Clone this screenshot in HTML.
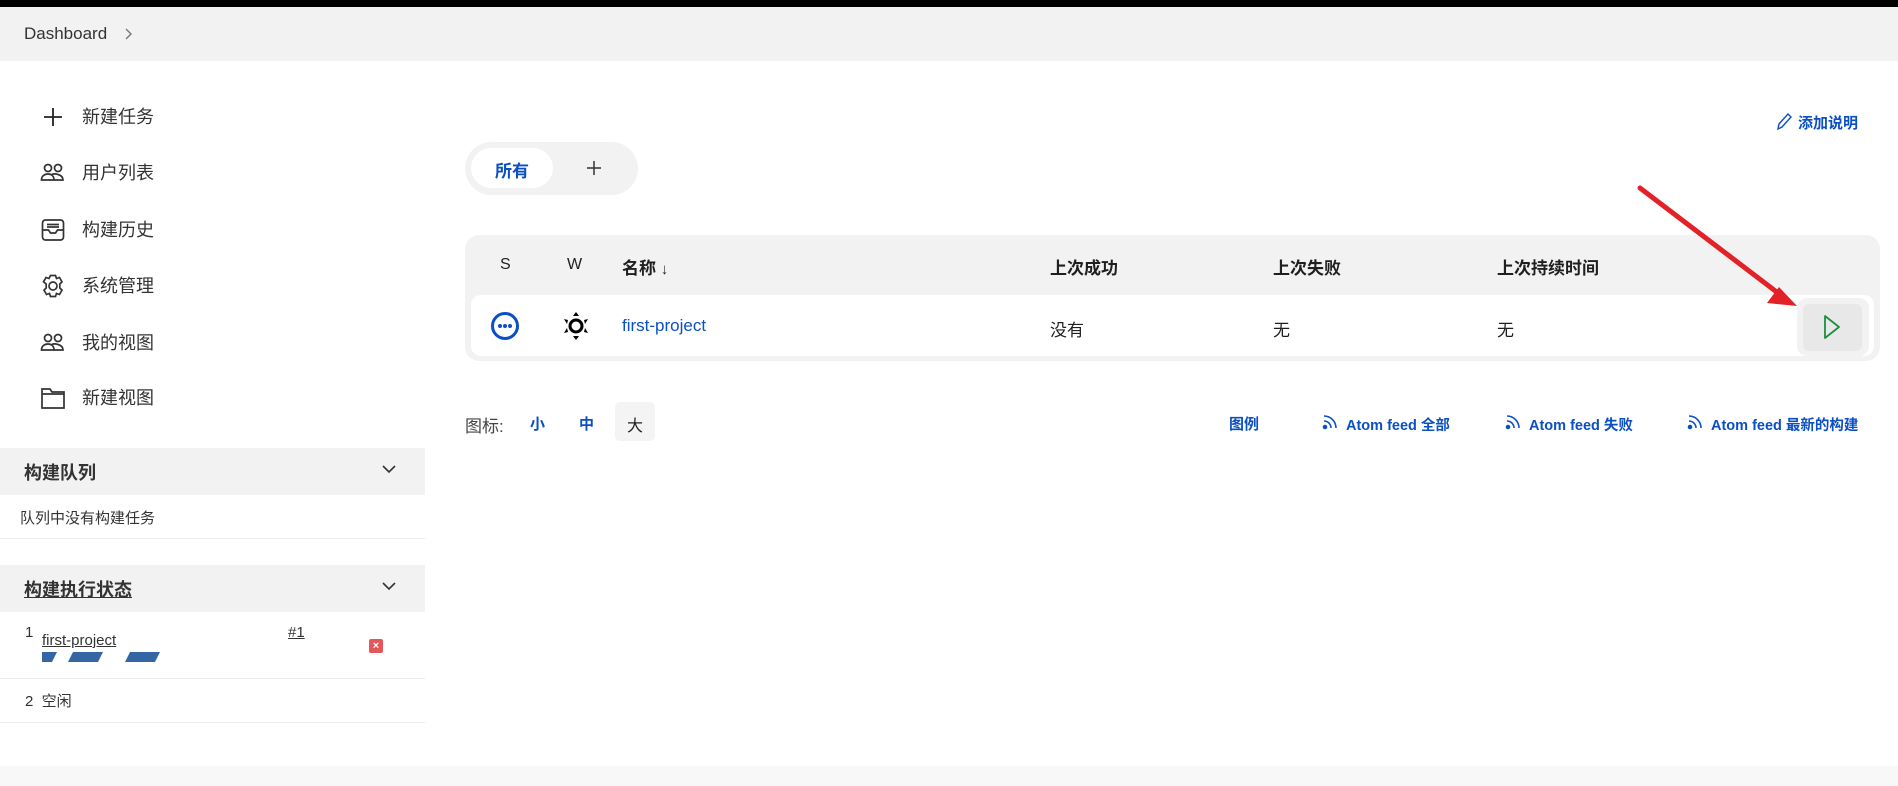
<!DOCTYPE html>
<html><head><meta charset="utf-8"><style>
*{margin:0;padding:0;box-sizing:border-box}
body{width:1898px;height:786px;overflow:hidden;background:#fff;font-family:"Liberation Sans","Noto Sans CJK SC",sans-serif;color:#1f1f1f;position:relative}
.a{position:absolute;white-space:nowrap}
.blue{color:#0b4fc4}
.b{font-weight:bold}
.ic{position:absolute;left:40px;width:26px;height:26px}
.menu{position:absolute;left:82px;font-size:18px;color:#333;line-height:24px}
</style></head><body>
<div class="a" style="left:0;top:0;width:1898px;height:7px;background:#000"></div>
<div class="a" style="left:0;top:7px;width:1898px;height:54px;background:#f2f2f2"></div>
<div class="a" style="left:24px;top:24px;font-size:17px;color:#333">Dashboard</div>
<svg class="a" style="left:123px;top:27px" width="10" height="14" viewBox="0 0 10 14"><path d="M3 2l5 5-5 5" fill="none" stroke="#777" stroke-width="1.4"/></svg>

<svg class="ic" style="top:104px" viewBox="0 0 26 26"><path d="M13 4v18M4 13h18" stroke="#222" stroke-width="1.8"/></svg>
<div class="menu" style="top:105px">新建任务</div>
<svg class="ic" style="top:160px" viewBox="0 0 26 26" fill="none" stroke="#333" stroke-width="1.7"><circle cx="8" cy="8" r="3.5"/><circle cx="18" cy="8" r="3.5"/><path d="M1.5 20c0-4 3-6 6.5-6s6 2 6 6H1.5zM12 14.5c1.5-.8 3.5-.8 6 0 3 .8 5 2.5 5 5.5H14"/></svg>
<div class="menu" style="top:161px">用户列表</div>
<svg class="ic" style="top:217px" viewBox="0 0 26 26" fill="none" stroke="#333" stroke-width="1.7"><rect x="2.5" y="3" width="21" height="20" rx="3"/><path d="M2.5 13h6l2 3h5l2-3h6M7 7.5h12M7 10h12"/></svg>
<div class="menu" style="top:218px">构建历史</div>
<svg class="ic" style="top:273px" viewBox="0 0 26 26" fill="none" stroke="#333" stroke-width="1.7"><path d="M10.5 2.5h5l1 3 3-1 2.5 4.3-2.2 2.2v4l2.2 2.2-2.5 4.3-3-1-1 3h-5l-1-3-3 1-2.5-4.3 2.2-2.2v-4L3.5 8.8 6 4.5l3 1z"/><circle cx="13" cy="13" r="4"/></svg>
<div class="menu" style="top:274px">系统管理</div>
<svg class="ic" style="top:330px" viewBox="0 0 26 26" fill="none" stroke="#333" stroke-width="1.7"><circle cx="8" cy="8" r="3.5"/><circle cx="18" cy="8" r="3.5"/><path d="M1.5 20c0-4 3-6 6.5-6s6 2 6 6H1.5zM12 14.5c1.5-.8 3.5-.8 6 0 3 .8 5 2.5 5 5.5H14"/></svg>
<div class="menu" style="top:331px">我的视图</div>
<svg class="ic" style="top:385px" viewBox="0 0 26 26" fill="none" stroke="#333" stroke-width="1.7"><path d="M2 4h8l2 3h12v16H2zM2 9h22"/></svg>
<div class="menu" style="top:386px">新建视图</div>

<div class="a" style="left:0;top:448px;width:425px;height:47px;background:#f2f2f2"></div>
<div class="a b" style="left:24px;top:459px;font-size:18px;color:#333">构建队列</div>
<svg class="a" style="left:382px;top:464px" width="14" height="10" viewBox="0 0 14 10"><path d="M1 2l6 6 6-6" fill="none" stroke="#333" stroke-width="1.6"/></svg>
<div class="a" style="left:20px;top:507px;font-size:15px;color:#333">队列中没有构建任务</div>
<div class="a" style="left:0;top:538px;width:425px;height:1px;background:#ececec"></div>

<div class="a" style="left:0;top:565px;width:425px;height:47px;background:#f2f2f2"></div>
<div class="a b" style="left:24px;top:576px;font-size:18px;color:#333;text-decoration:underline">构建执行状态</div>
<svg class="a" style="left:382px;top:581px" width="14" height="10" viewBox="0 0 14 10"><path d="M1 2l6 6 6-6" fill="none" stroke="#333" stroke-width="1.6"/></svg>
<div class="a" style="left:25px;top:624px;font-size:15px;color:#333">1</div>
<div class="a" style="left:42px;top:632px;font-size:15px;color:#333;text-decoration:underline">first-project</div>
<svg class="a" style="left:42px;top:652px" width="120" height="10" viewBox="0 0 120 10"><path d="M0 0h15l-5 10H0zM31 0h30l-5 10H26zM88 0h30l-5 10H83z" fill="#3465a4"/></svg>
<div class="a" style="left:288px;top:624px;font-size:15px;color:#333;text-decoration:underline">#1</div>
<div class="a" style="left:369px;top:639px;width:14px;height:14px;background:#e4585a;border-radius:2px;color:#fff;font-size:11px;line-height:14px;text-align:center;font-weight:bold">×</div>
<div class="a" style="left:0;top:678px;width:425px;height:1px;background:#ececec"></div>
<div class="a" style="left:25px;top:690px;font-size:15px;color:#333">2&nbsp; 空闲</div>
<div class="a" style="left:0;top:722px;width:425px;height:1px;background:#ececec"></div>
<div class="a" style="left:0;top:766px;width:1898px;height:20px;background:#f8f8f8"></div>

<svg class="a" style="left:1775px;top:111px" width="18" height="20" viewBox="0 0 18 20"><path d="M3 18l1-5 9-10 3 3-9 10z" fill="none" stroke="#0b4fc4" stroke-width="1.4"/></svg>
<div class="a b blue" style="left:1798px;top:112px;font-size:15px">添加说明</div>

<div class="a" style="left:465px;top:142px;width:173px;height:53px;background:#f2f2f2;border-radius:27px"></div>
<div class="a" style="left:471px;top:148px;width:82px;height:40px;background:#fff;border-radius:20px"></div>
<div class="a b blue" style="left:495px;top:157px;font-size:17px">所有</div>
<svg class="a" style="left:586px;top:160px" width="16" height="16" viewBox="0 0 16 16"><path d="M8 1v14M1 8h14" stroke="#333" stroke-width="1.5"/></svg>

<div class="a" style="left:465px;top:235px;width:1415px;height:126px;background:#f2f2f2;border-radius:14px"></div>
<div class="a" style="left:471px;top:295px;width:1403px;height:61px;background:#fff;border-radius:10px"></div>
<div class="a" style="left:500px;top:256px;font-size:16px">S</div>
<div class="a" style="left:567px;top:256px;font-size:16px">W</div>
<div class="a b" style="left:622px;top:254px;font-size:17px">名称 <span style="font-weight:normal;font-size:15px">↓</span></div>
<div class="a b" style="left:1050px;top:254px;font-size:17px">上次成功</div>
<div class="a b" style="left:1273px;top:254px;font-size:17px">上次失败</div>
<div class="a b" style="left:1497px;top:254px;font-size:17px">上次持续时间</div>

<svg class="a" style="left:490px;top:311px" width="30" height="30" viewBox="0 0 30 30"><circle cx="15" cy="15" r="12.5" fill="none" stroke="#0b4fc4" stroke-width="3"/><circle cx="10" cy="15" r="2" fill="#0b4fc4"/><circle cx="15" cy="15" r="2" fill="#0b4fc4"/><circle cx="20" cy="15" r="2" fill="#0b4fc4"/></svg>
<svg class="a" style="left:561px;top:309px" width="30" height="34" viewBox="0 0 30 34"><circle cx="15" cy="17" r="6" fill="none" stroke="#000" stroke-width="3"/><path d="M15 3l3 4h-6zM15 31l3-4h-6zM3 10l4 1-1 4zM27 10l-4 1 1 4zM3 24l4-1-1-4zM27 24l-4-1 1-4z" fill="#000"/></svg>
<div class="a blue" style="left:622px;top:316px;font-size:17px">first-project</div>
<div class="a" style="left:1050px;top:316px;font-size:17px">没有</div>
<div class="a" style="left:1273px;top:316px;font-size:17px">无</div>
<div class="a" style="left:1497px;top:316px;font-size:17px">无</div>
<div class="a" style="left:1797px;top:298px;width:72px;height:58px;background:#f2f2f2;border-radius:10px"></div>
<div class="a" style="left:1803px;top:304px;width:59px;height:47px;background:#e8e8e8;border-radius:6px"></div>
<svg class="a" style="left:1823px;top:314px" width="18" height="26" viewBox="0 0 18 26"><path d="M2 2l14 11L2 24z" fill="none" stroke="#1e8e3e" stroke-width="1.8" stroke-linejoin="round"/></svg>

<svg class="a" style="left:0;top:0" width="1898" height="786"><line x1="1640" y1="188" x2="1782" y2="296" stroke="#e32228" stroke-width="5" stroke-linecap="round"/><path d="M1797 306l-30-3 12-16z" fill="#e32228"/></svg>

<div class="a" style="left:465px;top:412px;font-size:17px;color:#444">图标:</div>
<div class="a b blue" style="left:530px;top:413px;font-size:15px">小</div>
<div class="a b blue" style="left:579px;top:413px;font-size:15px">中</div>
<div class="a" style="left:615px;top:402px;width:40px;height:39px;background:#f4f4f4;border-radius:5px"></div>
<div class="a" style="left:627px;top:412px;font-size:16px">大</div>

<div class="a b blue" style="left:1229px;top:413px;font-size:15px">图例</div>
<svg class="a" style="left:1322px;top:414px" width="16" height="16" viewBox="0 0 16 16" fill="none" stroke="#0b4fc4" stroke-width="1.6"><circle cx="3" cy="13" r="1.5" fill="#0b4fc4"/><path d="M2 7a7 7 0 0 1 7 7M2 2a12 12 0 0 1 12 12"/></svg>
<div class="a b blue" style="left:1346px;top:414px;font-size:14.5px">Atom feed 全部</div>
<svg class="a" style="left:1505px;top:414px" width="16" height="16" viewBox="0 0 16 16" fill="none" stroke="#0b4fc4" stroke-width="1.6"><circle cx="3" cy="13" r="1.5" fill="#0b4fc4"/><path d="M2 7a7 7 0 0 1 7 7M2 2a12 12 0 0 1 12 12"/></svg>
<div class="a b blue" style="left:1529px;top:414px;font-size:14.5px">Atom feed 失败</div>
<svg class="a" style="left:1687px;top:414px" width="16" height="16" viewBox="0 0 16 16" fill="none" stroke="#0b4fc4" stroke-width="1.6"><circle cx="3" cy="13" r="1.5" fill="#0b4fc4"/><path d="M2 7a7 7 0 0 1 7 7M2 2a12 12 0 0 1 12 12"/></svg>
<div class="a b blue" style="left:1711px;top:414px;font-size:14.5px">Atom feed 最新的构建</div>
</body></html>
